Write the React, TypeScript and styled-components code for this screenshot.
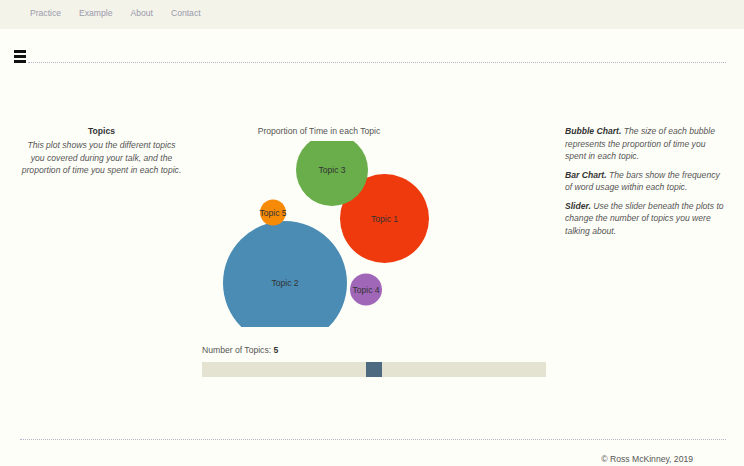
import styled, { createGlobalStyle } from 'styled-components'

const GlobalStyle = createGlobalStyle`
    html, body {
        margin: 0;
        padding: 0;
        overflow: hidden;
        background: #fefef8;
        font-family: "Liberation Sans", Arial, sans-serif;
        font-size: 8.6px;
        color: #444;
    }
`

const Page = styled.div`
    width: 744px;
    min-height: 466px;
`

const TopNav = styled.nav`
    height: 29px;
    display: flex;
    align-items: center;
    padding-left: 21px;
    background: #f3f3ea;
`

const NavLink = styled.a`
    padding: 0 9px;
    color: #9a9aaa;
    text-decoration: none;
    line-height: 12.5px;
    margin-top: -2px;
`

const Header = styled.div`
    display: flex;
    align-items: flex-end;
    margin-top: 21px;
    padding: 0 18px 0 14px;
`

const Hamburger = styled.div`
    display: flex;
    flex-direction: column;
    gap: 2px;
    width: 12px;

    span {
        display: block;
        height: 3px;
        background: #111;
    }
`

const Rule = styled.div`
    flex: 1;
    margin-left: 2px;
    border-bottom: 1px dotted #b4b4cc;
`

const Main = styled.main`
    display: flex;
    align-items: flex-start;
    margin-top: 62px;
    padding-left: 20px;
`

const LeftCol = styled.section`
    width: 163px;
    text-align: center;
    line-height: 12.5px;
`

const ColTitle = styled.div`
    font-weight: bold;
    color: #333;
    margin-bottom: 1.5px;
`

const Italic = styled.p`
    margin: 0;
    font-style: italic;
    color: #555;
    line-height: 12.5px;
`

const CenterCol = styled.section`
    width: 344px;
    margin-left: 19px;
`

const ChartTitle = styled.div`
    width: 234px;
    text-align: center;
    line-height: 12.5px;
    color: #555;
`

const BubbleSvg = styled.svg`
    display: block;
    margin-top: 3.5px;
    overflow: hidden;

    text {
        font-family: "Liberation Sans", Arial, sans-serif;
        font-size: 8.6px;
        fill: #333;
        text-anchor: middle;
        dominant-baseline: central;
    }
`

const SliderLabel = styled.div`
    margin-top: 16.5px;
    line-height: 12.5px;
    color: #555;

    b {
        color: #333;
    }
`

const Track = styled.div`
    position: relative;
    margin-top: 5.75px;
    height: 15px;
    background: #e4e3d2;
`

const Thumb = styled.div<{ $left: number }>`
    position: absolute;
    top: 0;
    left: ${p => p.$left}px;
    width: 16px;
    height: 15px;
    background: #4d6a80;
`

const RightCol = styled.section`
    width: 161px;
    margin-left: 19px;
`

const Note = styled(Italic)`
    & + & {
        margin-top: 6px;
    }

    b {
        color: #333;
    }
`

const Footer = styled.footer`
    margin: 62px 18px 0 20px;
    padding: 13px 33px 0 0;
    border-top: 1px dotted #b4b4cc;
    text-align: right;
    line-height: 12.5px;
    color: #555;
`

const bubbles = [
    { label: 'Topic 2', cx: 83, cy: 142, r: 62, fill: '#4a8cb4' },
    { label: 'Topic 1', cx: 182.5, cy: 77.5, r: 44.5, fill: '#ee3a0c' },
    { label: 'Topic 3', cx: 130, cy: 29, r: 36, fill: '#69ae4a' },
    { label: 'Topic 5', cx: 71, cy: 71.5, r: 13, fill: '#f78a06' },
    { label: 'Topic 4', cx: 164, cy: 148.5, r: 16, fill: '#a066b8' },
]

const App = () => {
    const topics = 5

    return (
        <Page>
            <GlobalStyle />
            <TopNav>
                <NavLink href="#">Practice</NavLink>
                <NavLink href="#">Example</NavLink>
                <NavLink href="#">About</NavLink>
                <NavLink href="#">Contact</NavLink>
            </TopNav>

            <Header>
                <Hamburger>
                    <span />
                    <span />
                    <span />
                </Hamburger>
                <Rule />
            </Header>

            <Main>
                <LeftCol>
                    <ColTitle>Topics</ColTitle>
                    <Italic>
                        This plot shows you the different topics you covered during your talk,
                        and the proportion of time you spent in each topic.
                    </Italic>
                </LeftCol>

                <CenterCol>
                    <ChartTitle>Proportion of Time in each Topic</ChartTitle>
                    <BubbleSvg width={234} height={186} viewBox="0 0 234 186">
                        {bubbles.map(b => (
                            <circle key={b.label} cx={b.cx} cy={b.cy} r={b.r} fill={b.fill} />
                        ))}
                        {bubbles.map(b => (
                            <text key={b.label} x={b.cx} y={b.cy}>{b.label}</text>
                        ))}
                    </BubbleSvg>
                    <SliderLabel>Number of Topics: <b>{topics}</b></SliderLabel>
                    <Track>
                        <Thumb $left={164} />
                    </Track>
                </CenterCol>

                <RightCol>
                    <Note>
                        <b>Bubble Chart.</b> The size of each bubble represents the proportion of
                        time you spent in each topic.
                    </Note>
                    <Note>
                        <b>Bar Chart.</b> The bars show the frequency of word usage within each topic.
                    </Note>
                    <Note>
                        <b>Slider.</b> Use the slider beneath the plots to change the number of
                        topics you were talking about.
                    </Note>
                </RightCol>
            </Main>

            <Footer>© Ross McKinney, 2019</Footer>
        </Page>
    )
}

export default App
